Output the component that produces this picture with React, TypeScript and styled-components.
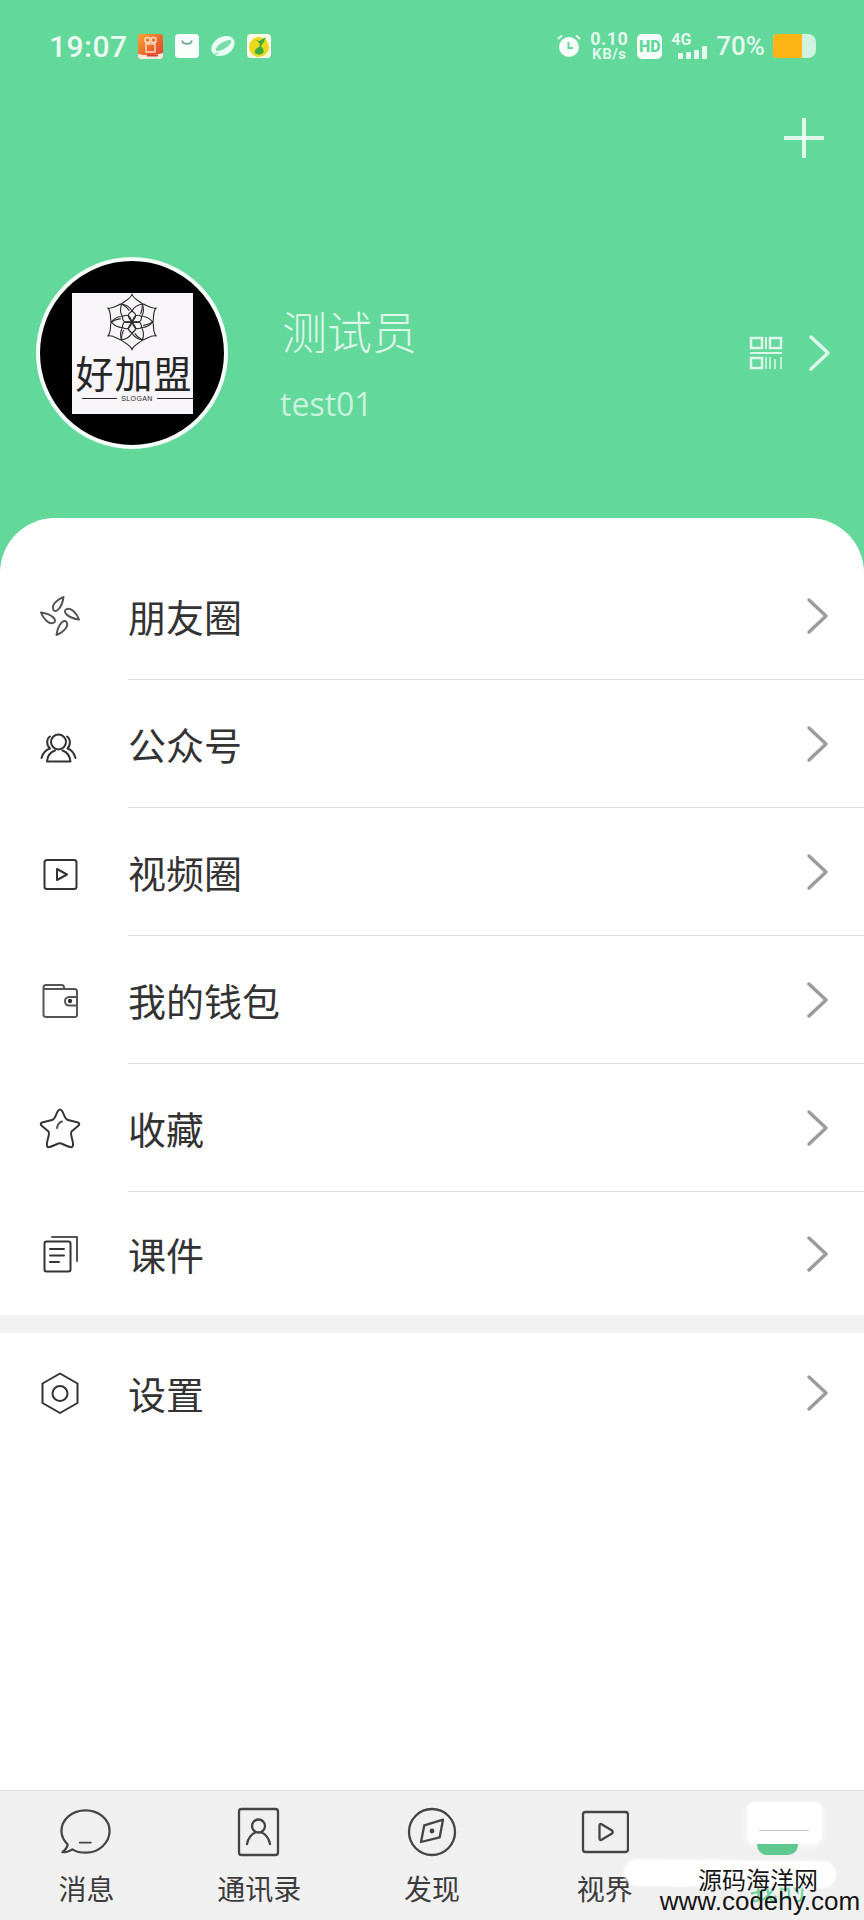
import React from 'react'
import styled, { createGlobalStyle } from 'styled-components'

const GREEN = '#62d89b'
const CJK = '"Noto Sans CJK SC", "Liberation Sans", sans-serif'

const Reset = createGlobalStyle`
  html, body { margin: 0; padding: 0; background: #fff; }
  body { font-family: ${CJK}; }
`

// icons are drawn in a 44 box, same scale as the screenshot
const Line = ({ children, size = 44, w = 2 }: { children: React.ReactNode; size?: number; w?: number }) => (
  <svg width={size} height={size} viewBox={`0 0 ${size} ${size}`} fill="none" stroke="currentColor" strokeWidth={w} strokeLinecap="round" strokeLinejoin="round">
    {children}
  </svg>
)

const PetalsIcon = () => (
  <Line>
    {[0, 90, 180, 270].map((r) => (
      <path key={r} transform={`rotate(${r} 22 22)`} d="M25.5 3C20 5 12.500 11 15.500 16C18 19.500 24 14 25.500 3Z" stroke="#555" />
    ))}
  </Line>
)

const GroupIcon = () => (
  <Line>
    <circle cx="20.500" cy="20" r="7.500" />
    <path d="M17 28.500C12.500 30 9.500 34 9 39.500H32.500C32 34 28.500 30 24.500 28.500" />
    <path d="M12 14.500C8.500 16.500 8 23 12 26.500C7.500 28 4.500 32 3.500 36" />
    <path d="M29 14.500C32.500 16.500 33 23 29.500 26.500C33.500 28 36.500 32 37.500 36" />
  </Line>
)

const VideoIcon = () => (
  <Line>
    <rect x="6.500" y="10" width="32" height="29" rx="2.500" />
    <path d="M19 19L29 24.500L19 30Z" />
  </Line>
)

const WalletIcon = () => (
  <Line>
    <path d="M26 11V9.500C26 8 25 7 23.500 7H8C6.500 7 5.500 8 5.500 9.500V36.500C5.500 38 6.500 39 8 39H37C38.500 39 39 38 39 36.500V13.500C39 12 38 11 36.500 11H5.500" stroke="#555" />
    <path d="M39 19H31.500C28.500 19 27 21 27 23C27 25.500 28.500 27.500 31.500 27.500H39" stroke="#555" />
    <circle cx="32" cy="23" r="1.200" fill="#333" stroke="#333" />
  </Line>
)

const StarIcon = () => (
  <Line>
    <path d="M22 3.500C23.500 3.500 24.500 5 26 9C27 12 28 13.500 30 14L40 16.500C42 17.500 41.500 18.500 40 20L33.500 25.500C32.500 27 33 29 34 32.500C35 36 35.500 40 34 41C32.500 42 28 39.500 24.500 38C22.500 37 21 37 19 38C15.500 39.500 11 42 9.500 41C8.500 40 9 36 10 32.500C11 29 11.500 27 10.500 25.500L4 20C2.500 18.500 2 17.500 4 16.500L14 14C16 13.500 17 12 18 9C19.500 5 20.500 3.500 22 3.500Z" />
    <path d="M19 22C19.500 18.500 21 16.500 24 15.500" stroke="#555" />
  </Line>
)

const DocsIcon = () => (
  <Line>
    <rect x="6.500" y="9.500" width="26" height="30" rx="2" />
    <path d="M14 5H39V29" stroke="#555" />
    <path d="M12 17H26M12 23.500H26M12 30H21" />
  </Line>
)

const HexIcon = () => (
  <Line>
    <path d="M22 2.500L39.500 12.500V32L22 42L4.500 32V12.500Z" />
    <circle cx="22" cy="22.500" r="7.500" />
  </Line>
)

const Chevron = ({ light }: { light?: boolean }) => (
  <svg width="24" height="38" viewBox="0 0 24 38" fill="none" stroke={light ? 'rgba(255,255,255,.8)' : '#9c9c9c'} strokeWidth="3.500" strokeLinecap="round" strokeLinejoin="round">
    <path d="M3 3L20 19L3 35" />
  </svg>
)

const QrIcon = () => (
  <svg width="34" height="34" viewBox="0 0 34 34" fill="none" stroke="rgba(255,255,255,.8)" strokeWidth="2">
    <rect x="2" y="2" width="11" height="10" strokeWidth="2.500" />
    <rect x="21" y="2" width="11" height="10" strokeWidth="2.500" />
    <path d="M17 1V13M1 17H33" />
    <rect x="2" y="22" width="11" height="10" strokeWidth="2.500" />
    <path d="M17 21V33M21 21V33M26 23V33M32 21V33" strokeWidth="1.500" />
  </svg>
)

const AlarmIcon = () => (
  <svg width="24" height="24" viewBox="0 0 24 24">
    <circle cx="12" cy="13" r="10" fill="rgba(255,255,255,.95)" />
    <path d="M1 5L5 1.500M23 5L19 1.500" stroke="rgba(255,255,255,.9)" strokeWidth="2" />
    <path d="M11.500 8V14H16" stroke={GREEN} strokeWidth="2" fill="none" />
  </svg>
)

const VideoAppIcon = () => (
  <svg width="25" height="25" viewBox="0 0 25 25">
    <defs>
      <linearGradient id="app-orange" x1="0" y1="0" x2="1" y2="1">
        <stop offset="0" stopColor="#f7a32e" />
        <stop offset="1" stopColor="#e1382f" />
      </linearGradient>
    </defs>
    <rect width="25" height="25" rx="3" fill="url(#app-orange)" />
    <circle cx="9.500" cy="6" r="2.700" fill="none" stroke="#ffe9d0" strokeWidth="1.300" />
    <circle cx="15.500" cy="6" r="2.700" fill="none" stroke="#ffe9d0" strokeWidth="1.300" />
    <rect x="8" y="10" width="9" height="8" fill="none" stroke="#ffe9d0" strokeWidth="1.300" />
    <path d="M0 20Q12 23 25 19V22a3 3 0 0 1-3 3H3a3 3 0 0 1-3-3Z" fill="#ffe9e0" />
    <path d="M9 21.500H20" stroke="#d8402f" strokeWidth="2" />
  </svg>
)

const BagIcon = () => (
  <svg width="24" height="24" viewBox="0 0 24 24">
    <rect width="24" height="24" rx="4" fill="#fafffc" />
    <path d="M7 6.500C8 11 16 11 17 6.500" fill="none" stroke="#6aa98e" strokeWidth="1.600" />
  </svg>
)

const PlanetIcon = () => (
  <svg width="24" height="24" viewBox="0 0 24 24">
    <ellipse cx="12" cy="12" rx="12.500" ry="9" transform="rotate(-32 12 12)" fill="#eafff4" />
    <ellipse cx="12.500" cy="11.500" rx="9" ry="3.200" transform="rotate(-32 12.500 11.500)" fill="#7bdcaa" />
    <path d="M3 20L8 19" stroke="#7bdcaa" strokeWidth="1" />
  </svg>
)

const FruitIcon = () => (
  <svg width="24" height="24" viewBox="0 0 24 24">
    <rect width="24" height="24" rx="4" fill="#fdfbe6" />
    <circle cx="12" cy="13" r="10" fill="#e8d81f" />
    <path d="M8 6Q15 9 12 13Q7 15 8 19Q13 23 17 18Q16 14 14 12Q18 7 19 3Q14 6 12 7Z" fill="#3cab3c" />
  </svg>
)

const LotusMark = () => (
  <svg width="56" height="58" viewBox="0 0 56 58" fill="none" stroke="#2a2a2a" strokeWidth="1.100" strokeLinejoin="round">
    {[0, 60, 120, 180, 240, 300].map((r) => (
      <g key={r} transform={`rotate(${r} 28 29)`}>
        <path d="M28 1C29 6 36 8 38.500 11C33 12 30 14 28 18C26 14 23 12 17.500 11C20 8 27 6 28 1Z" />
        <path d="M28 29C23.500 24 23 21 28 18C33 21 32.500 24 28 29Z" />
        <path d="M38.500 11C38.500 15 38 18 36.500 21" />
      </g>
    ))}
  </svg>
)

const BubbleIcon = () => (
  <svg width="52" height="48" viewBox="0 0 54 48" fill="none" stroke="#444" strokeWidth="2.300" strokeLinecap="round" strokeLinejoin="round">
    <path d="M8 37C4 33 1.500 28 1.500 23C1.500 11 12.500 1.500 26.500 1.500C40.500 1.500 51.500 11 51.500 23C51.500 35 40.500 45.500 27 45.500C21 45.500 16 44 13 42C10 44 6 45 2.500 45C5 43 7.500 40.500 8 37Z" />
    <path d="M20.500 35H32" strokeWidth="1.800" />
  </svg>
)

const ContactsIcon = () => (
  <svg width="44" height="50" viewBox="0 0 44 50" fill="none" stroke="#444" strokeWidth="2.300" strokeLinecap="round" strokeLinejoin="round">
    <rect x="2" y="2" width="39" height="46" rx="2.500" />
    <circle cx="21.500" cy="19" r="6.500" />
    <path d="M10 37C11 31 15 26.500 18.500 25.500M33 37C32 31 28 26.500 24.500 25.500" />
  </svg>
)

const CompassIcon = () => (
  <svg width="50" height="50" viewBox="0 0 50 50" fill="none" stroke="#444" strokeWidth="2.300" strokeLinecap="round" strokeLinejoin="round">
    <circle cx="25" cy="25" r="23" />
    <path d="M17.300 18.300L36 12.700L32.700 30.300L14 35Z" />
    <circle cx="25" cy="24" r="1.300" fill="#444" />
  </svg>
)

const PlayTabIcon = () => (
  <svg width="48" height="44" viewBox="0 0 48 44" fill="none" stroke="#444" strokeWidth="2.300" strokeLinecap="round" strokeLinejoin="round">
    <rect x="2" y="2" width="45" height="40" rx="2.500" />
    <path d="M18.500 15.500C18.500 14 19.500 13.500 21 14.500L31 20.500C32 21.500 32 22.500 31 23.500L21 29.500C19.500 30.500 18.500 30 18.500 28.500Z" />
  </svg>
)

const menu = [
  { label: '朋友圈', icon: <PetalsIcon /> },
  { label: '公众号', icon: <GroupIcon /> },
  { label: '视频圈', icon: <VideoIcon /> },
  { label: '我的钱包', icon: <WalletIcon /> },
  { label: '收藏', icon: <StarIcon /> },
]

const tabs = [
  { label: '消息', icon: <BubbleIcon /> },
  { label: '通讯录', icon: <ContactsIcon /> },
  { label: '发现', icon: <CompassIcon /> },
  { label: '视界', icon: <PlayTabIcon /> },
]

export default function App() {
  return (
    <Page>
      <Reset />
      <Header>
        <StatusBar>
          <StatusLeft>
            <Clock>19:07</Clock>
            <VideoAppIcon />
            <BagIcon />
            <PlanetIcon />
            <FruitIcon />
          </StatusLeft>
          <StatusRight>
            <AlarmIcon />
            <Speed>
              <SpeedValue>0.10</SpeedValue>
              <SpeedUnit>KB/s</SpeedUnit>
            </Speed>
            <HdBadge>HD</HdBadge>
            <Signal>
              <SignalLabel>4G</SignalLabel>
              <SignalBars>
                <SignalBar $h={6} />
                <SignalBar $h={7} />
                <SignalBar $h={9} />
                <SignalBar $h={13} />
              </SignalBars>
            </Signal>
            <Percent>70%</Percent>
            <Battery>
              <BatteryFill />
            </Battery>
          </StatusRight>
        </StatusBar>
        <ActionRow>
          <PlusButton />
        </ActionRow>
        <Profile>
          <Avatar>
            <LogoCard>
              <LotusMark />
              <LogoName>好加盟</LogoName>
              <Slogan>SLOGAN</Slogan>
            </LogoCard>
          </Avatar>
          <Identity>
            <Name>测试员</Name>
            <Account>test01</Account>
          </Identity>
          <ProfileLinks>
            <QrIcon />
            <Chevron light />
          </ProfileLinks>
        </Profile>
      </Header>

      <Sheet>
        <MenuList>
          {menu.map((item) => (
            <MenuRow key={item.label}>
              <IconSlot>{item.icon}</IconSlot>
              <RowBody $divider>
                <RowLabel>{item.label}</RowLabel>
                <Chevron />
              </RowBody>
            </MenuRow>
          ))}
          <MenuRow $h={123}>
            <IconSlot>
              <DocsIcon />
            </IconSlot>
            <RowBody>
              <RowLabel>课件</RowLabel>
              <Chevron />
            </RowBody>
          </MenuRow>
        </MenuList>
        <SectionGap />
        <MenuRow $h={120}>
          <IconSlot>
            <HexIcon />
          </IconSlot>
          <RowBody>
            <RowLabel>设置</RowLabel>
            <Chevron />
          </RowBody>
        </MenuRow>
      </Sheet>

      <TabBar>
        {tabs.map((tab) => (
          <Tab key={tab.label}>
            <TabIcon>{tab.icon}</TabIcon>
            <TabLabel>{tab.label}</TabLabel>
          </Tab>
        ))}
        <Tab>
          <TabIcon />
          <TabLabel $active>我的</TabLabel>
        </Tab>
      </TabBar>

      {/* watermark burnt over the tab bar */}
      <BlurCard>
        <BlurScribble />
      </BlurCard>
      <BlurPill />
      <BlurBand />
      <Watermark>
        <WatermarkCn>源码海洋网</WatermarkCn>
        <WatermarkUrl>www.codehy.com</WatermarkUrl>
      </Watermark>
    </Page>
  )
}

const Page = styled.div`
  position: relative;
  display: flex;
  flex-direction: column;
  width: 864px;
  height: 1920px;
  overflow: hidden;
  background: ${GREEN};
`

const Header = styled.header`
  height: 518px;
  flex: none;
  color: #fff;
`

const StatusBar = styled.div`
  display: flex;
  justify-content: space-between;
  align-items: center;
  height: 92px;
  padding: 0 48px 0 49px;
`

const StatusLeft = styled.div`
  display: flex;
  align-items: center;
  gap: 12px;
`

const Clock = styled.span`
  width: 77px;
  font: 500 30px 'Roboto', sans-serif;
  letter-spacing: 0.5px;
  color: rgba(255, 255, 255, 0.88);
`

const StatusRight = styled.div`
  display: flex;
  align-items: center;
  gap: 9px;
`

const Speed = styled.div`
  display: flex;
  flex-direction: column;
  align-items: center;
  width: 38px;
  font-family: 'Roboto', sans-serif;
  font-weight: 700;
  color: rgba(255, 255, 255, 0.82);
`

const SpeedValue = styled.span`
  font-size: 18px;
  line-height: 16px;
  letter-spacing: 0.5px;
`

const SpeedUnit = styled.span`
  font-size: 15px;
  line-height: 14px;
  letter-spacing: 0.5px;
  white-space: nowrap;
`

const HdBadge = styled.span`
  display: flex;
  align-items: center;
  justify-content: center;
  width: 25px;
  height: 25px;
  border-radius: 5px;
  background: rgba(255, 255, 255, 0.95);
  font: 900 16px 'Roboto', sans-serif;
  color: ${GREEN};
`

const Signal = styled.div`
  display: flex;
  flex-direction: column;
  width: 36px;
`

const SignalLabel = styled.span`
  height: 12px;
  font: 700 16px/13px 'Roboto', sans-serif;
  color: rgba(255, 255, 255, 0.85);
`

const SignalBars = styled.div`
  display: flex;
  align-items: flex-end;
  justify-content: flex-end;
  gap: 3px;
  height: 14px;
`

const SignalBar = styled.i<{ $h: number }>`
  display: block;
  width: 5px;
  height: ${(p) => p.$h}px;
  background: rgba(255, 255, 255, 0.85);
  border-radius: 1px;
`

const Percent = styled.span`
  font: 500 26px 'Roboto', sans-serif;
  color: rgba(255, 255, 255, 0.85);
`

const Battery = styled.div`
  width: 43px;
  height: 24px;
  margin-left: -1px;
  border-radius: 4px 8px 8px 4px;
  background: rgba(255, 255, 255, 0.7);
  overflow: hidden;
`

const BatteryFill = styled.div`
  width: 29px;
  height: 100%;
  background: #fdb515;
`

const ActionRow = styled.div`
  display: flex;
  justify-content: flex-end;
  align-items: center;
  height: 91px;
  padding-right: 40px;
`

const PlusButton = styled.span`
  display: block;
  width: 40px;
  height: 40px;
  background:
    linear-gradient(rgba(255, 255, 255, 0.8), rgba(255, 255, 255, 0.8)) center / 100% 4px no-repeat,
    linear-gradient(rgba(255, 255, 255, 0.8), rgba(255, 255, 255, 0.8)) center / 4px 100% no-repeat;
`

const Profile = styled.div`
  display: flex;
  align-items: center;
  margin-top: 74px;
  padding: 0 32px 0 36px;
`

const Avatar = styled.div`
  display: flex;
  align-items: center;
  justify-content: center;
  box-sizing: border-box;
  width: 192px;
  height: 192px;
  flex: none;
  border: 4px solid #f4fff9;
  border-radius: 50%;
  background: #000;
`

const LogoCard = styled.div`
  display: flex;
  flex-direction: column;
  align-items: center;
  box-sizing: border-box;
  width: 121px;
  height: 121px;
  background: #f7f5f8;
  overflow: hidden;
`

const LogoName = styled.div`
  width: 100%;
  height: 42px;
  padding-left: 4px;
  box-sizing: border-box;
  font: 400 38px/42px ${CJK};
  letter-spacing: 1px;
  white-space: nowrap;
  color: #262626;
`

const Slogan = styled.div`
  display: flex;
  align-items: center;
  gap: 4px;
  width: 100%;
  padding-left: 10px;
  box-sizing: border-box;
  font: 400 7px/12px 'Liberation Sans', sans-serif;
  letter-spacing: 0.4px;
  color: #262626;

  &::before,
  &::after {
    content: '';
    flex: 1;
    height: 1px;
    background: #262626;
  }
`

const Identity = styled.div`
  display: flex;
  flex-direction: column;
  flex: 1;
  margin-left: 54px;
  padding-top: 22px;
`

const Name = styled.div`
  font: 300 45px/54px ${CJK};
  color: rgba(255, 255, 255, 0.78);
`

const Account = styled.div`
  margin-top: 26px;
  margin-left: -2px;
  font: 400 32px/40px 'Open Sans', sans-serif;
  color: rgba(255, 255, 255, 0.66);
`

const ProfileLinks = styled.div`
  display: flex;
  align-items: center;
  gap: 25px;
`

const Sheet = styled.main`
  flex: 1;
  padding-top: 34px;
  border-radius: 55px 55px 0 0;
  background: #fff;
`

const MenuList = styled.div`
  display: flex;
  flex-direction: column;
`

const MenuRow = styled.div<{ $h?: number }>`
  display: flex;
  height: ${(p) => p.$h ?? 128}px;
`

const IconSlot = styled.div`
  display: flex;
  align-items: center;
  width: 90px;
  padding-left: 38px;
  box-sizing: border-box;
  flex: none;
  color: #333;
`

const RowBody = styled.div<{ $divider?: boolean }>`
  display: flex;
  align-items: center;
  justify-content: space-between;
  flex: 1;
  padding-right: 34px;
  margin-left: 38px;
  border-bottom: ${(p) => (p.$divider ? '1px solid #dcdcdc' : 'none')};
`

const RowLabel = styled.span`
  font: 400 38px/50px ${CJK};
  color: #333;
`

const SectionGap = styled.div`
  height: 18px;
  background: #f2f2f2;
`

const TabBar = styled.nav`
  display: grid;
  grid-template-columns: repeat(5, 1fr);
  height: 130px;
  flex: none;
  box-sizing: border-box;
  border-top: 1.5px solid #dedede;
  background: #f0f0f0;
`

const Tab = styled.div`
  display: flex;
  flex-direction: column;
  align-items: center;
`

const TabIcon = styled.div`
  display: flex;
  align-items: center;
  justify-content: center;
  height: 66px;
  margin-top: 8px;
`

const TabLabel = styled.span<{ $active?: boolean }>`
  font: 400 28px/40px ${CJK};
  margin-top: 3px;
  color: ${(p) => (p.$active ? '#6fd3a0' : '#3c3c3c')};
`

const BlurCard = styled.div`
  position: absolute;
  left: 747px;
  top: 1802px;
  width: 75px;
  height: 42px;
  border-radius: 8px;
  background: #fff;
  box-shadow: 0 2px 8px rgba(255, 255, 255, 0.8);
`

const BlurScribble = styled.div`
  position: absolute;
  left: 12px;
  top: 28px;
  width: 50px;
  height: 1px;
  background: #c4c8c6;
`

const BlurPill = styled.div`
  position: absolute;
  left: 757px;
  top: 1844px;
  width: 41px;
  height: 11px;
  border-radius: 0 0 10px 10px;
  background: #5dc98e;
`

const BlurBand = styled.div`
  position: absolute;
  left: 624px;
  top: 1860px;
  width: 212px;
  height: 27px;
  border-radius: 14px;
  background: #fff;
  filter: blur(1px);
  transform: rotate(0.6deg);
`

const Watermark = styled.div`
  position: absolute;
  left: 656px;
  top: 1867px;
  width: 208px;
  display: flex;
  flex-direction: column;
  align-items: center;
  color: #151515;
`

const WatermarkCn = styled.span`
  margin-left: -4px;
  font: 400 24px/24px ${CJK};
`

const WatermarkUrl = styled.span`
  font: 400 26px/20px 'Liberation Sans', sans-serif;
  white-space: nowrap;
`
